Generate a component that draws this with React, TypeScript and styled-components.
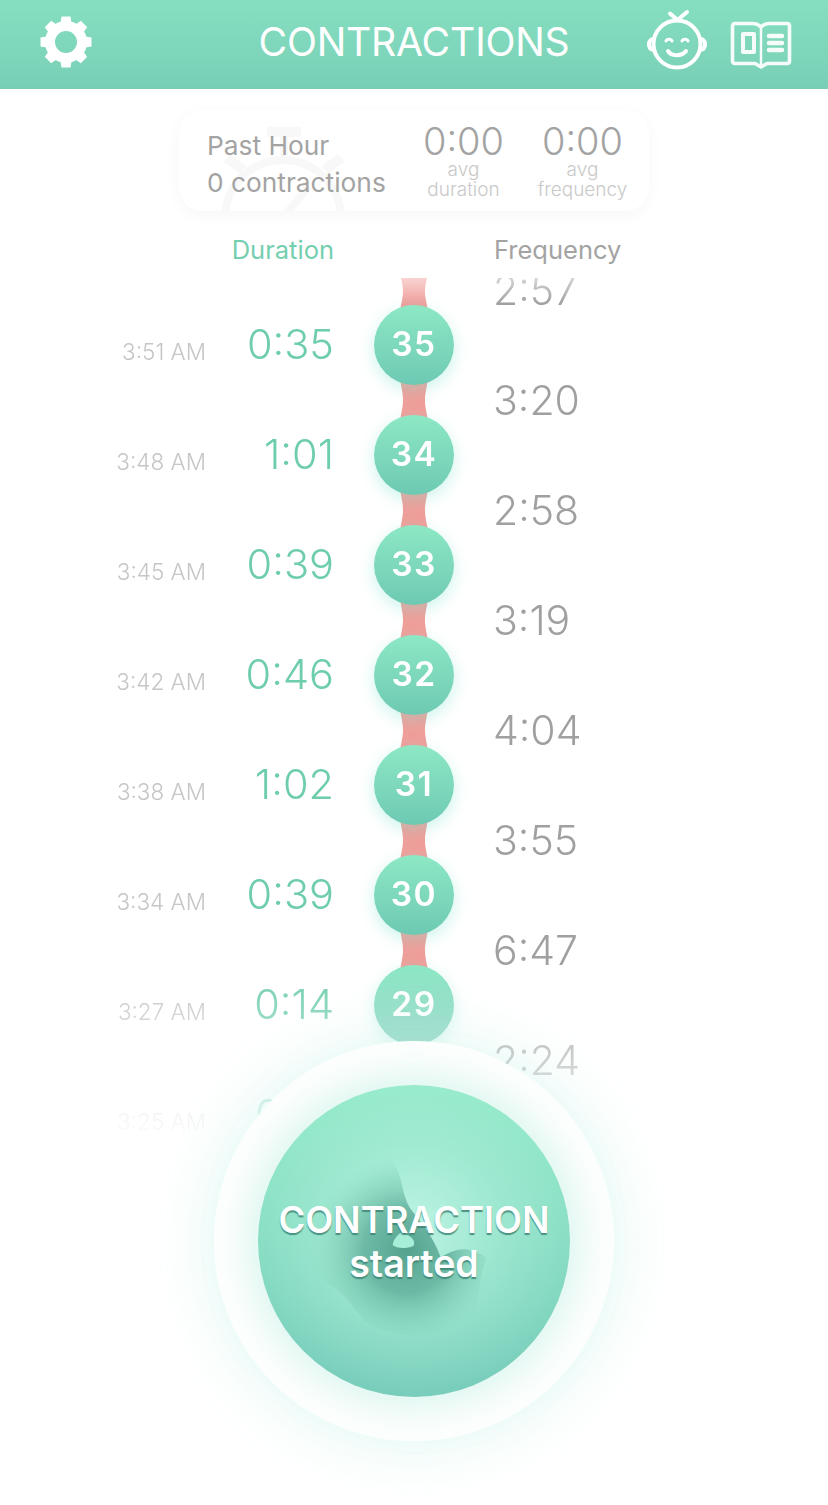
import React from "react";
import styled, { createGlobalStyle } from "styled-components";

const rows = [
  { time: "3:51 AM", duration: "0:35", count: 35, frequency: "3:20" },
  { time: "3:48 AM", duration: "1:01", count: 34, frequency: "2:58" },
  { time: "3:45 AM", duration: "0:39", count: 33, frequency: "3:19" },
  { time: "3:42 AM", duration: "0:46", count: 32, frequency: "4:04" },
  { time: "3:38 AM", duration: "1:02", count: 31, frequency: "3:55" },
  { time: "3:34 AM", duration: "0:39", count: 30, frequency: "6:47" },
  { time: "3:27 AM", duration: "0:14", count: 29, frequency: "2:24" },
  { time: "3:25 AM", duration: "0:31", count: 28, frequency: "" },
];

const GlobalStyle = createGlobalStyle`
  html, body {
    margin: 0;
    padding: 0;
    background: #fff;
  }
  body {
    font-family: Inter, "Liberation Sans", sans-serif;
  }
`;

const Page = styled.div`
  position: relative;
  width: 828px;
  height: 1505px;
  overflow: hidden;
  background: #fff;
`;

const Header = styled.header`
  display: grid;
  grid-template-columns: 1fr auto 1fr;
  align-items: center;
  height: 89px;
  background: linear-gradient(180deg, #87dfc1 0%, #78cfb6 100%);
`;

const HeaderLeft = styled.div`
  display: flex;
  padding: 0 0 5px 40px;
`;

const HeaderRight = styled.div`
  display: flex;
  justify-content: flex-end;
  align-items: center;
  gap: 24px;
  padding-right: 37px;
`;

const HeaderTitle = styled.h1`
  margin: 0 0 6px;
  font-size: 39.2px;
  font-weight: 400;
  line-height: 83px;
  color: #fff;
  letter-spacing: -0.2px;
`;

const SummaryCard = styled.section`
  position: relative;
  display: flex;
  align-items: flex-start;
  box-sizing: border-box;
  width: 470px;
  height: 101px;
  margin: 21px auto 0;
  padding: 10px 0 0 28px;
  border-radius: 24px;
  background: #fff;
  box-shadow: 0 4px 18px rgba(0, 0, 0, 0.035);
  overflow: hidden;
`;

const Watermark = styled.svg`
  position: absolute;
  left: 38px;
  top: 16px;
`;

const PastHour = styled.div`
  position: relative;
  flex: none;
  width: 197px;
  padding-top: 7px;
  font-size: 26.3px;
  line-height: 37px;
  color: #a3a3a3;
  white-space: nowrap;
`;

const Average = styled.div`
  position: relative;
  flex: none;
  width: 119px;
  padding-top: 2px;
  text-align: center;
`;

const AverageValue = styled.div`
  font-size: 38px;
  font-weight: 300;
  line-height: 38px;
  color: #a3a3a3;
`;

const AverageLabel = styled.div`
  font-size: 19px;
  font-weight: 300;
  line-height: 20px;
  color: #c9c9c9;
`;

const Columns = styled.div`
  display: grid;
  grid-template-columns: 206px 128px 160px 1fr;
  margin-top: 22px;
  height: 34px;
  font-size: 25.5px;
  line-height: 34px;
`;

const DurationHead = styled.div`
  grid-column: 2;
  text-align: right;
  color: #74cfb0;
`;

const FrequencyHead = styled.div`
  grid-column: 4;
  color: #a3a3a3;
`;

const List = styled.div`
  height: 872px;
  margin-top: 11px;
  overflow: hidden;
  -webkit-mask-image: linear-gradient(180deg, rgba(0, 0, 0, 0.45) 0, #000 26px, #000 690px, rgba(0, 0, 0, 0.45) 790px, transparent 872px);
  mask-image: linear-gradient(180deg, rgba(0, 0, 0, 0.45) 0, #000 26px, #000 690px, rgba(0, 0, 0, 0.45) 790px, transparent 872px);
`;

const Row = styled.div<{ $lead?: boolean }>`
  display: grid;
  grid-template-columns: 206px 128px 160px 1fr;
  grid-template-rows: minmax(0, 1fr);
  height: ${(p) => (p.$lead ? 27 : 110)}px;
`;

const Time = styled.div`
  font-size: 22.5px;
  font-weight: 300;
  line-height: 94px;
  text-align: right;
  color: #c6c6c6;
`;

const Duration = styled.div`
  font-size: 41.5px;
  font-weight: 300;
  line-height: 78px;
  text-align: right;
  color: #6ecdab;
`;

const Track = styled.div`
  display: flex;
  flex-direction: column;
  align-items: center;
`;

const Bubble = styled.div`
  position: relative;
  z-index: 1;
  flex: none;
  width: 80px;
  height: 80px;
  border-radius: 50%;
  background: linear-gradient(180deg, #8de8c5 0%, #6ec9b3 100%);
  box-shadow: 0 5px 16px rgba(120, 225, 205, 0.38);
  font-size: 33.5px;
  font-weight: 600;
  line-height: 79px;
  letter-spacing: 1.5px;
  text-align: center;
  color: #fff;
`;

const Frequency = styled.div`
  grid-column: 4;
  align-self: end;
  margin-left: -1px;
  font-size: 41px;
  font-weight: 300;
  line-height: 30px;
  color: #a0a0a0;
`;

const ConnectorShape = styled.svg`
  display: block;
  flex: none;
  margin: -3px 0;
`;

const Glow = styled.div`
  position: absolute;
  left: 214px;
  top: 1041px;
  display: flex;
  align-items: center;
  justify-content: center;
  width: 400px;
  height: 400px;
  border-radius: 50%;
  background: #fff;
  box-shadow: 0 0 60px 4px rgba(140, 232, 210, 0.24);
`;

const ButtonHalo = styled.div`
  position: relative;
  width: 312px;
  height: 312px;
  border-radius: 50%;
  box-shadow: 0 0 46px 8px rgba(135, 225, 200, 0.36);
`;

const StartButton = styled.button`
  display: block;
  position: relative;
  width: 312px;
  height: 312px;
  padding: 0;
  border: none;
  border-radius: 50%;
  overflow: hidden;
  background: radial-gradient(circle at 50% 45%, rgba(190, 245, 228, 0.95) 0%, rgba(170, 236, 216, 0.6) 38%, rgba(150, 230, 205, 0) 72%),
    linear-gradient(180deg, #93ebc9 0%, #78cdbb 100%);
  font-family: inherit;
`;

const Silhouette = styled.svg`
  position: absolute;
  inset: 0;
`;

const ButtonText = styled.div`
  position: absolute;
  left: 0;
  right: 0;
  top: 113px;
  font-size: 36.3px;
  font-weight: 600;
  line-height: 44px;
  color: #fff;
  text-shadow: 0 2px 1px rgba(60, 130, 115, 0.85);
  white-space: nowrap;
`;

const Started = styled.span`
  font-size: 37.5px;
`;

const IconRoot = styled.svg`
  display: block;
  overflow: visible;
`;

const GearIcon = () => (
  <IconRoot width="52" height="52" viewBox="0 0 52 52">
    <circle cx="26" cy="26" r="16" fill="none" stroke="#fff" strokeWidth="10" />
    {[0, 45, 90, 135, 180, 225, 270, 315].map((angle) => (
      <path key={angle} d="M21.5 0.5h9l1.5 9h-12z" fill="#fff" transform={`rotate(${angle} 26 26)`} />
    ))}
  </IconRoot>
);

const BabyIcon = () => (
  <IconRoot width="60" height="70" viewBox="0 0 60 70" fill="none" stroke="#fff" strokeWidth="4" strokeLinecap="round" strokeLinejoin="round">
    <circle cx="30" cy="34" r="23.500" />
    <path d="M6.5 29C3.5 29.500 2 31.500 2 34.500s1.500 5 4.500 5.500M53.500 29c3 .5 4.500 2.500 4.500 5.500s-1.500 5-4.500 5.500" />
    <path d="M23 3.500l7.500 6.500M40 2l-9.500 8" />
    <path d="M19 31c1-2.500 5-2.500 6 0M35 31c1-2.500 5-2.500 6 0" strokeWidth="3" />
    <path d="M21 41c3 5.500 14 5.500 18 0" />
  </IconRoot>
);

const BookIcon = () => (
  <IconRoot width="60" height="48" viewBox="0 0 60 48" fill="none" stroke="#fff" strokeWidth="3.6" strokeLinejoin="round" strokeLinecap="round" opacity="0.92">
    <path d="M4 2.500h18c3.500 0 6 1.500 8 3.500 2-2 4.500-3.500 8-3.500h18c1.500 0 2.500 1 2.500 2.500v35c0 1.500-1 2.500-2.500 2.500H36l-6 3.500-6-3.500H4c-1.500 0-2.500-1-2.500-2.500V5C1.500 3.500 2.500 2.500 4 2.500z" />
    <path d="M30 6v38" strokeWidth="2.500" />
    <rect x="12" y="13" width="11" height="18" strokeWidth="4" />
    <path d="M38 15h13M38 22h13M38 29h13" strokeWidth="4.500" />
  </IconRoot>
);

const StopwatchMark = () => (
  <Watermark width="140" height="100" viewBox="0 0 140 100" fill="none" stroke="#f8f8f8" strokeWidth="8">
    <path d="M50 6h34" strokeWidth="10" />
    <path d="M67 8v22" />
    <circle cx="66" cy="92" r="58" />
    <path d="M10 32l16 12M124 32l-16 12" strokeWidth="10" />
    <path d="M66 92l26-32" />
  </Watermark>
);

const Connector = ({ height }: { height: number }) => (
  <ConnectorShape width="30" height={height} viewBox={`0 0 30 ${height}`}>
    <path
      d={`M1.500 0C3 ${height * 0.25} 4 ${height * 0.35} 4 ${height / 2}S3 ${height * 0.75} 1.500 ${height}H28.500C27 ${height * 0.75} 26 ${height * 0.65} 26 ${height / 2}S27 ${height * 0.25} 28.500 0z`}
      fill="#f09e9a"
    />
  </ConnectorShape>
);

const ButtonSilhouette = () => (
  <Silhouette width="312" height="312" viewBox="174 195 936 936">
    <defs>
      <radialGradient id="shade" gradientUnits="userSpaceOnUse" cx="620" cy="690" r="290">
        <stop offset="0" stopColor="#4f9e8a" stopOpacity="0.95" />
        <stop offset="0.45" stopColor="#5fae9a" stopOpacity="0.8" />
        <stop offset="0.75" stopColor="#78c8b0" stopOpacity="0.42" />
        <stop offset="1" stopColor="#8fdcc4" stopOpacity="0" />
      </radialGradient>
      <clipPath id="figure">
        <path d="M570 415C610 460 600 510 630 565C665 610 700 650 722 712C760 690 800 670 860 715C840 760 835 830 830 890C760 970 560 960 490 900C460 860 440 830 400 800C340 770 260 740 200 620C300 500 470 420 570 415z" />
      </clipPath>
    </defs>
    <rect x="174" y="195" width="936" height="936" fill="url(#shade)" clipPath="url(#figure)" />
    <path d="M600 640C625 640 650 660 640 678C615 688 590 685 578 675C580 660 590 648 600 640z" fill="#a6eed8" />
  </Silhouette>
);

export default function App() {
  return (
    <Page>
      <GlobalStyle />
      <Header>
        <HeaderLeft>
          <GearIcon />
        </HeaderLeft>
        <HeaderTitle>CONTRACTIONS</HeaderTitle>
        <HeaderRight>
          <BabyIcon />
          <BookIcon />
        </HeaderRight>
      </Header>

      <SummaryCard>
        <StopwatchMark />
        <PastHour>
          Past Hour
          <br />0 contractions
        </PastHour>
        <Average>
          <AverageValue>0:00</AverageValue>
          <AverageLabel>
            avg
            <br />
            duration
          </AverageLabel>
        </Average>
        <Average>
          <AverageValue>0:00</AverageValue>
          <AverageLabel>
            avg
            <br />
            frequency
          </AverageLabel>
        </Average>
      </SummaryCard>

      <Columns>
        <DurationHead>Duration</DurationHead>
        <FrequencyHead>Frequency</FrequencyHead>
      </Columns>

      <List>
        <Row $lead>
          <div />
          <div />
          <Track>
            <Connector height={33} />
          </Track>
          <Frequency>2:57</Frequency>
        </Row>
        {rows.map((row) => (
          <Row key={row.count}>
            <Time>{row.time}</Time>
            <Duration>{row.duration}</Duration>
            <Track>
              <Bubble>{row.count}</Bubble>
              <Connector height={36} />
            </Track>
            <Frequency>{row.frequency}</Frequency>
          </Row>
        ))}
      </List>

      <Glow>
        <ButtonHalo>
          <StartButton>
            <ButtonSilhouette />
            <ButtonText>
              CONTRACTION
              <br />
              <Started>started</Started>
            </ButtonText>
          </StartButton>
        </ButtonHalo>
      </Glow>
    </Page>
  );
}
